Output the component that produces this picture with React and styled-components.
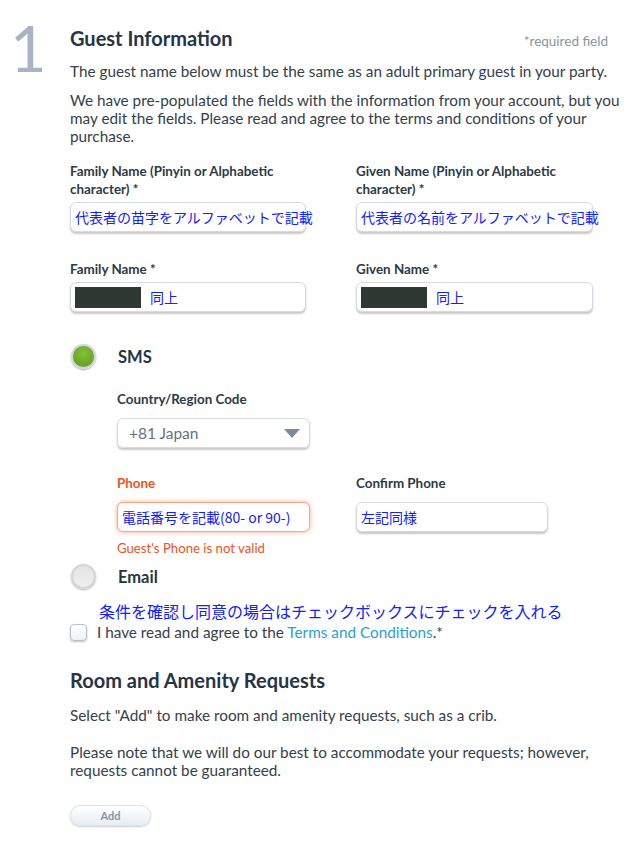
import React from 'react';
import styled, { createGlobalStyle } from 'styled-components';

const GlobalStyle = createGlobalStyle`
  body {
    margin: 0;
    background: #fff;
    font-family: Lato, "Noto Sans CJK JP", sans-serif;
    color: #2c3a48;
  }
`;

const RED = '#f0531c';
const NOTE_BLUE = '#1020ff';

function App() {
    return (
        <>
            <GlobalStyle />
            <Page>
                <StepNumber>1</StepNumber>
                <Content>
                    <HeaderRow>
                        <Title>Guest Information</Title>
                        <Required>*required field</Required>
                    </HeaderRow>
                    <Para $top={12}>The guest name below must be the same as an adult primary guest in your party.</Para>
                    <Para $top={11}>
                        We have pre-populated the fields with the information from your account, but you
                        may edit the fields. Please read and agree to the terms and conditions of your
                        purchase.
                    </Para>

                    <NameGrid>
                        <Field>
                            <Label $gap={4}>Family Name (Pinyin or Alphabetic character) *</Label>
                            <TextBox>代表者の苗字をアルファベットで記載</TextBox>
                        </Field>
                        <Field>
                            <Label $gap={4}>Given Name (Pinyin or Alphabetic character) *</Label>
                            <TextBox>代表者の名前をアルファベットで記載</TextBox>
                        </Field>
                        <Field>
                            <Label $gap={4}>Family Name *</Label>
                            <TextBox>
                                <Redacted />
                                同上
                            </TextBox>
                        </Field>
                        <Field>
                            <Label $gap={4}>Given Name *</Label>
                            <TextBox>
                                <Redacted />
                                同上
                            </TextBox>
                        </Field>
                    </NameGrid>

                    <RadioRow $top={32}>
                        <Radio $checked />
                        <RadioLabel>SMS</RadioLabel>
                    </RadioRow>

                    <SmsBlock>
                        <Field>
                            <Label $gap={10}>Country/Region Code</Label>
                            <SelectBox>
                                <span>+81 Japan</span>
                                <Arrow />
                            </SelectBox>
                        </Field>
                        <PhoneGrid>
                            <Field>
                                <Label $gap={10} $error>Phone</Label>
                                <TextBox $error>電話番号を記載(80- or 90-)</TextBox>
                                <ErrorText>Guest's Phone is not valid</ErrorText>
                            </Field>
                            <Field>
                                <Label $gap={10}>Confirm Phone</Label>
                                <TextBox>左記同様</TextBox>
                            </Field>
                        </PhoneGrid>
                    </SmsBlock>

                    <RadioRow $top={8}>
                        <Radio />
                        <RadioLabel>Email</RadioLabel>
                    </RadioRow>

                    <Note>条件を確認し同意の場合はチェックボックスにチェックを入れる</Note>
                    <CheckRow>
                        <Checkbox />
                        <span>
                            I have read and agree to the <TermsLink>Terms and Conditions</TermsLink>.*
                        </span>
                    </CheckRow>

                    <SubTitle>Room and Amenity Requests</SubTitle>
                    <Para $top={14}>Select "Add" to make room and amenity requests, such as a crib.</Para>
                    <Para $top={19}>
                        Please note that we will do our best to accommodate your requests; however,
                        requests cannot be guaranteed.
                    </Para>
                    <AddButton type="button">Add</AddButton>
                </Content>
            </Page>
        </>
    );
}

export default App;

const Page = styled.div`
    display: grid;
    grid-template-columns: 70px 552px;
    padding-bottom: 20px;
`;

const StepNumber = styled.div`
    font-family: Lato, sans-serif;
    font-weight: 400;
    font-size: 63px;
    line-height: 1;
    color: #a8b4c4;
    padding: 16px 0 0 10px;
`;

const Content = styled.div`
    padding-top: 26px;
`;

const HeaderRow = styled.div`
    display: flex;
    justify-content: space-between;
    align-items: baseline;
`;

const Title = styled.h2`
    margin: 0;
    font-size: 20px;
    font-weight: 700;
    line-height: 24px;
    color: #253545;
`;

const Required = styled.span`
    font-size: 13.5px;
    color: #8794a2;
    margin-right: 14px;
`;

const Para = styled.p`
    margin: ${props => props.$top ?? 10}px 0 0;
    font-size: 15.3px;
    line-height: 18px;
    color: #34404c;
`;

const NameGrid = styled.div`
    display: grid;
    grid-template-columns: 236px 237px;
    column-gap: 50px;
    row-gap: 28px;
    margin-top: 17px;
`;

const Field = styled.div`
    display: flex;
    flex-direction: column;
    justify-content: flex-end;
`;

const Label = styled.label`
    font-size: 13.4px;
    font-weight: 700;
    line-height: 18px;
    color: ${props => props.$error ? RED : '#2c3a48'};
    margin-bottom: ${props => props.$gap}px;
`;

const TextBox = styled.div`
    box-sizing: border-box;
    height: 30px;
    display: flex;
    align-items: center;
    gap: 9px;
    padding: 0 4px;
    border: 1px solid ${props => props.$error ? '#f8a58c' : '#d6dbe0'};
    border-radius: 6px;
    background: #fff;
    box-shadow: ${props => props.$error
        ? '0 0 4px rgba(255, 90, 40, 0.55)'
        : '0 2px 2px rgba(0, 0, 0, 0.22)'};
    font-family: "Noto Sans CJK JP", sans-serif;
    font-size: 14px;
    color: ${NOTE_BLUE};
    white-space: nowrap;
`;

const Redacted = styled.span`
    display: block;
    width: 66px;
    height: 21px;
    background: #2f3833;
`;

const RadioRow = styled.div`
    display: flex;
    align-items: center;
    gap: 22px;
    margin-top: ${props => props.$top}px;
`;

const Radio = styled.span`
    box-sizing: border-box;
    width: 25px;
    height: 25px;
    border-radius: 50%;
    border: 2px solid #d2d5d8;
    background: ${props => props.$checked
        ? 'radial-gradient(circle at 50% 35%, #86c13a 0%, #6aa826 60%, #5d991c 100%)'
        : 'linear-gradient(#e4e4e4, #efefef)'};
    box-shadow: 0 1px 2px rgba(0, 0, 0, 0.3);
    margin-left: 1px;
`;

const RadioLabel = styled.span`
    font-size: 16.5px;
    font-weight: 700;
    color: #253545;
`;

const SmsBlock = styled.div`
    padding-left: 47px;
    margin-top: 21px;
`;

const SelectBox = styled.div`
    box-sizing: border-box;
    width: 193px;
    height: 30px;
    display: flex;
    align-items: center;
    justify-content: space-between;
    padding: 0 9px 0 11px;
    border: 1px solid #d6dbe0;
    border-radius: 6px;
    box-shadow: 0 2px 2px rgba(0, 0, 0, 0.22);
    font-size: 15.5px;
    color: #66727f;
`;

const Arrow = styled.span`
    width: 0;
    height: 0;
    border-left: 8px solid transparent;
    border-right: 8px solid transparent;
    border-top: 9px solid #7d8a99;
`;

const PhoneGrid = styled.div`
    display: grid;
    grid-template-columns: 193px 192px;
    column-gap: 46px;
    margin-top: 26px;
    align-items: start;
`;

const ErrorText = styled.div`
    margin-top: 8px;
    font-size: 13.2px;
    line-height: 16px;
    color: ${RED};
`;

const Note = styled.div`
    margin: 12px 0 0 29px;
    font-family: "Noto Sans CJK JP", sans-serif;
    font-size: 16px;
    line-height: 20px;
    color: ${NOTE_BLUE};
`;

const CheckRow = styled.div`
    display: flex;
    align-items: center;
    gap: 10px;
    font-size: 15.3px;
    color: #34404c;
    margin-top: 2px;
`;

const Checkbox = styled.span`
    box-sizing: border-box;
    width: 17px;
    height: 17px;
    border-radius: 4px;
    border: 1px solid #b9c0c8;
    background: linear-gradient(#fff, #eef0f3);
    box-shadow: 0 1px 2px rgba(0, 0, 0, 0.25);
`;

const TermsLink = styled.a`
    color: #2b9ed6;
    text-decoration: none;
`;

const SubTitle = styled.h3`
    margin: 27px 0 0;
    font-size: 20px;
    font-weight: 700;
    line-height: 24px;
    color: #253545;
`;

const AddButton = styled.button`
    display: block;
    margin-top: 26px;
    width: 81px;
    height: 21px;
    border-radius: 11px;
    border: 1px solid #dde3e8;
    background: linear-gradient(#ffffff, #e7edf2);
    box-shadow: 0 1px 2px rgba(0, 0, 0, 0.2);
    font-family: Lato, sans-serif;
    font-size: 11px;
    font-weight: 700;
    color: #8795a5;
    padding: 0;
`;
